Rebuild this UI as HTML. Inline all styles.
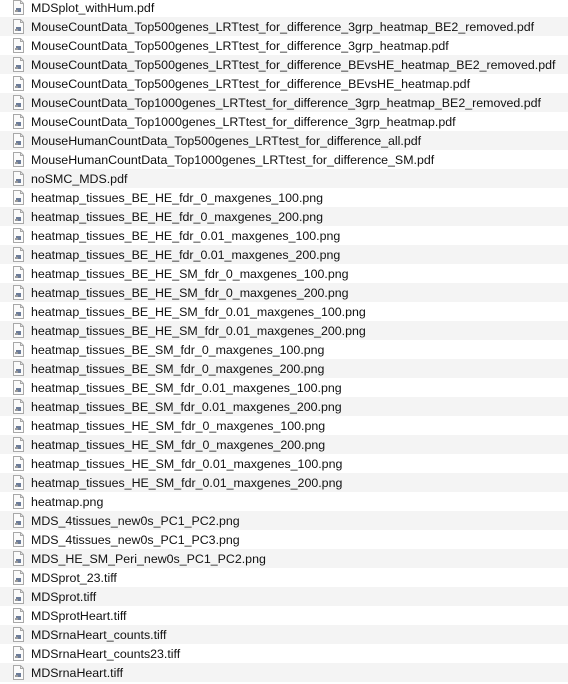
<!DOCTYPE html>
<html><head><meta charset="utf-8"><style>
body{margin:0;width:568px;height:684px;overflow:hidden;background:#fff;font-family:"Liberation Sans",Arial,sans-serif;font-size:12.4px;color:#111}
.list{position:absolute;top:-2px;left:0;width:568px}
.r{height:19px;line-height:20px;position:relative;white-space:nowrap}
.r:nth-child(even){background:#f4f4f4}
.r span{position:absolute;left:31px;top:0}
.ic{position:absolute;left:13px;top:2px;width:11px;height:15px}
</style></head><body><div class="list" id="l"></div>
<script>
var n=["MDSplot_withHum.pdf","MouseCountData_Top500genes_LRTtest_for_difference_3grp_heatmap_BE2_removed.pdf","MouseCountData_Top500genes_LRTtest_for_difference_3grp_heatmap.pdf","MouseCountData_Top500genes_LRTtest_for_difference_BEvsHE_heatmap_BE2_removed.pdf","MouseCountData_Top500genes_LRTtest_for_difference_BEvsHE_heatmap.pdf","MouseCountData_Top1000genes_LRTtest_for_difference_3grp_heatmap_BE2_removed.pdf","MouseCountData_Top1000genes_LRTtest_for_difference_3grp_heatmap.pdf","MouseHumanCountData_Top500genes_LRTtest_for_difference_all.pdf","MouseHumanCountData_Top1000genes_LRTtest_for_difference_SM.pdf","noSMC_MDS.pdf","heatmap_tissues_BE_HE_fdr_0_maxgenes_100.png","heatmap_tissues_BE_HE_fdr_0_maxgenes_200.png","heatmap_tissues_BE_HE_fdr_0.01_maxgenes_100.png","heatmap_tissues_BE_HE_fdr_0.01_maxgenes_200.png","heatmap_tissues_BE_HE_SM_fdr_0_maxgenes_100.png","heatmap_tissues_BE_HE_SM_fdr_0_maxgenes_200.png","heatmap_tissues_BE_HE_SM_fdr_0.01_maxgenes_100.png","heatmap_tissues_BE_HE_SM_fdr_0.01_maxgenes_200.png","heatmap_tissues_BE_SM_fdr_0_maxgenes_100.png","heatmap_tissues_BE_SM_fdr_0_maxgenes_200.png","heatmap_tissues_BE_SM_fdr_0.01_maxgenes_100.png","heatmap_tissues_BE_SM_fdr_0.01_maxgenes_200.png","heatmap_tissues_HE_SM_fdr_0_maxgenes_100.png","heatmap_tissues_HE_SM_fdr_0_maxgenes_200.png","heatmap_tissues_HE_SM_fdr_0.01_maxgenes_100.png","heatmap_tissues_HE_SM_fdr_0.01_maxgenes_200.png","heatmap.png","MDS_4tissues_new0s_PC1_PC2.png","MDS_4tissues_new0s_PC1_PC3.png","MDS_HE_SM_Peri_new0s_PC1_PC2.png","MDSprot_23.tiff","MDSprot.tiff","MDSprotHeart.tiff","MDSrnaHeart_counts.tiff","MDSrnaHeart_counts23.tiff","MDSrnaHeart.tiff"];
var ic='<svg class="ic" viewBox="0 0 11 15"><path d="M0.5 0.5H7.5L10.5 3.5V14.5H0.5Z" fill="#fbfbfb" stroke="#a8a8a8"/><path d="M7.5 0.5V3.5H10.5" fill="none" stroke="#a8a8a8"/><rect x="3" y="8" width="5" height="4" fill="#6d7d99"/><rect x="2" y="10" width="3" height="2" fill="#999"/></svg>';
var h="";n.forEach(function(t){h+='<div class="r">'+ic+'<span>'+t+'</span></div>'});
document.getElementById("l").innerHTML=h;
</script></body></html>
